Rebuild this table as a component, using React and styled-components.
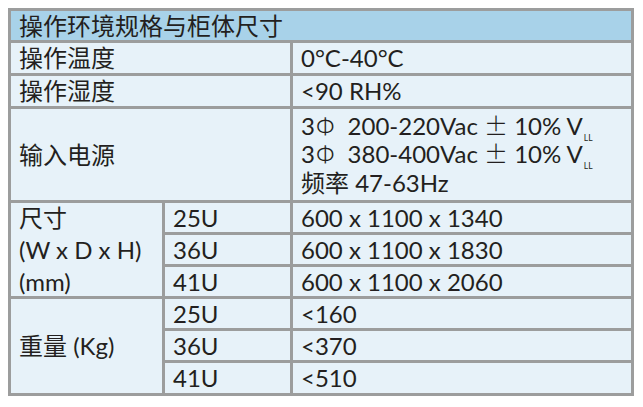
import React from 'react';
import styled, { createGlobalStyle } from 'styled-components';

const GlobalStyle = createGlobalStyle`
  html, body {
    margin: 0;
    padding: 0;
    background: #ffffff;
  }
  body {
    font-family: Lato, "Noto Sans CJK SC", sans-serif;
    color: #231f20;
  }
`;

const dims = [
  ['25U', '600 x 1100 x 1340'],
  ['36U', '600 x 1100 x 1830'],
  ['41U', '600 x 1100 x 2060'],
];

const weights = [
  ['25U', '<160'],
  ['36U', '<370'],
  ['41U', '<510'],
];

const power = ['200-220Vac', '380-400Vac'];

function App() {
  return (
    <>
      <GlobalStyle />
      <Page>
        <Grid>
          <Header>操作环境规格与柜体尺寸</Header>

          <Cell $span={2}>操作温度</Cell>
          <Cell>0°C-40°C</Cell>

          <Cell $span={2}>操作湿度</Cell>
          <Cell>&lt;90 RH%</Cell>

          <Cell $span={2}>输入电源</Cell>
          <Stack>
            {power.map(range => (
              <Line key={range}>
                3<Phi>Φ</Phi>{range} <Wide>±</Wide> 10% V<Sub>LL</Sub>
              </Line>
            ))}
            <Line>频率 47-63Hz</Line>
          </Stack>

          <Label $rows={3}>
            <LabelLine>尺寸</LabelLine>
            <LabelLine>(W x D x H)</LabelLine>
            <LabelLine>(mm)</LabelLine>
          </Label>
          {dims.map(([model, size]) => (
            <React.Fragment key={model}>
              <Cell>{model}</Cell>
              <Cell>{size}</Cell>
            </React.Fragment>
          ))}

          <Cell $rows={3}>重量 (Kg)</Cell>
          {weights.map(([model, kg]) => (
            <React.Fragment key={model}>
              <Cell>{model}</Cell>
              <Cell>{kg}</Cell>
            </React.Fragment>
          ))}
        </Grid>
      </Page>
    </>
  );
}

const Page = styled.div`
  padding: 8px;
`;

const Grid = styled.div`
  display: grid;
  width: 626px;
  box-sizing: border-box;
  grid-template-columns: 151px 125px 338px;
  grid-template-rows: 29px 30px 30px 91px repeat(5, 29px) 30px;
  gap: 3px;
  padding: 3px;
  background: #9c9d9d;
  font-size: 24px;
`;

const Cell = styled.div`
  grid-column: span ${props => props.$span || 1};
  grid-row: span ${props => props.$rows || 1};
  display: flex;
  align-items: center;
  padding: 0 8px;
  background: #e7f2f9;
  white-space: nowrap;
  line-height: 1;
`;

const Header = styled(Cell)`
  grid-column: 1 / -1;
  background: #a8d2e9;
`;

const Stack = styled(Cell)`
  flex-direction: column;
  align-items: flex-start;
  justify-content: center;
`;

const Line = styled.div`
  line-height: 28.5px;
`;

const Wide = styled.span`
  font-family: "Noto Sans CJK SC", sans-serif;
  font-weight: 300;
  line-height: 1;
`;

const Phi = styled(Wide)`
  margin: 0 13px 0 1px;
`;

const Label = styled(Cell)`
  flex-direction: column;
  align-items: flex-start;
  justify-content: space-between;
`;

const LabelLine = styled.div`
  height: 29px;
  display: flex;
  align-items: center;
`;

const Sub = styled.span`
  font-size: 8.5px;
  line-height: 0;
  vertical-align: -6px;
  margin-left: 1px;
`;

export default App;
